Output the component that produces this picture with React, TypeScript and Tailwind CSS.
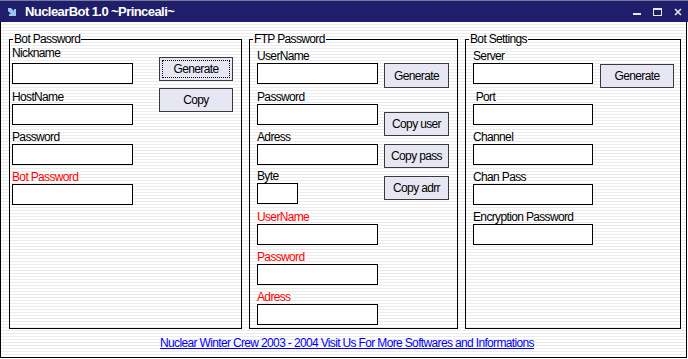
import React from 'react';

const stripes =
  'bg-[repeating-linear-gradient(to_bottom,#ffffff_0px,#ffffff_2px,#ebebeb_2px,#ebebeb_3px)]';

const Field: React.FC<{ label: string; red?: boolean; h: string; w?: string; pb?: string }> = ({
  label,
  red,
  h,
  w = 'w-[121px]',
  pb = '',
}) => (
  <div className="flex flex-col">
    <div className={`${h} ${pb} flex items-end leading-[14px] whitespace-pre ${red ? 'text-[#ff0000]' : 'text-black'}`}>
      {label}
    </div>
    <input readOnly className={`${w} h-[21px] border border-black bg-white outline-none`} />
  </div>
);

const Btn: React.FC<{ label: string; cls: string; focus?: boolean }> = ({ label, cls, focus }) => (
  <button
    className={`relative ${cls} border border-[#3a3a3a] bg-[#e7e7f3] text-black leading-[14px] flex items-center justify-center`}
  >
    {focus && <span className="absolute inset-[2px] border border-dotted border-black" />}
    {label}
  </button>
);

const Group: React.FC<{ title: string; cls: string; children: React.ReactNode }> = ({ title, cls, children }) => (
  <fieldset className={`${cls} h-[297px] border border-black m-0 p-0 min-w-0`}>
    <legend className="ml-[3px] px-[1px] leading-[14px] text-black">{title}</legend>
    {children}
  </fieldset>
);

export default function App() {
  return (
    <div className="w-[688px] h-[359px] bg-white font-['Liberation_Sans',Arial,sans-serif] text-[12px] tracking-[-0.65px] overflow-hidden">
      {/* title bar */}
      <div className="h-[22px] bg-[#1e1e6a] border-t border-[#7a7aa0] flex items-center">
        <svg width="10" height="10" viewBox="0 0 10 10" className="ml-[7px]">
          <path d="M1 1 L4 1 L7 4 L7 2 L9 2 L9 9 L2 9 L2 7 L4 7 L1 4 Z" fill="#9cc4f0" />
        </svg>
        <span className="ml-[8px] text-white font-bold text-[13px] tracking-[-0.57px] leading-none">
          NuclearBot 1.0 ~Princeali~
        </span>
        <div className="ml-auto mr-[6px] flex items-center gap-[12px] text-white">
          <svg width="8" height="8" viewBox="0 0 8 8">
            <rect x="0" y="5" width="8" height="2" fill="#e8e8f0" />
          </svg>
          <svg width="9" height="8" viewBox="0 0 9 8">
            <rect x="0.5" y="0.5" width="8" height="7" fill="none" stroke="#e8e8f0" />
            <rect x="0" y="0" width="9" height="2" fill="#e8e8f0" />
          </svg>
          <svg width="8" height="8" viewBox="0 0 8 8">
            <path d="M1 1 L7 7 M7 1 L1 7" stroke="#e8e8f0" strokeWidth="1.6" />
          </svg>
        </div>
      </div>

      {/* body */}
      <div className={`h-[336px] w-[687px] border-l border-r border-b border-black ${stripes} flex flex-col`}>
        <div className="flex gap-[7px] pl-[8px] pt-[10px]">
          <Group title="Bot Password" cls="w-[233px]">
            <div className="flex pl-[2px]">
              <div className="flex flex-col">
                <Field label="Nickname" h="h-[17px]" pb="pb-[3px]" />
                <Field label="HostName" h="h-[20px]" />
                <Field label="Password" h="h-[19px]" />
                <Field label="Bot Password" h="h-[19px]" red />
              </div>
              <div className="flex flex-col ml-[26px] mt-[11px] gap-[7px]">
                <Btn label="Generate" cls="w-[74px] h-[24px]" focus />
                <Btn label="Copy" cls="w-[74px] h-[24px]" />
              </div>
            </div>
          </Group>

          <Group title="FTP Password" cls="w-[209px]">
            <div className="flex pl-[7px]">
              <div className="flex flex-col">
                <Field label="UserName" h="h-[17px]" />
                <Field label="Password" h="h-[20px]" />
                <Field label="Adress" h="h-[19px]" />
                <Field label="Byte" h="h-[18px]" w="w-[41px]" />
                <Field label="UserName" h="h-[20px]" red />
                <Field label="Password" h="h-[19px]" red />
                <Field label="Adress" h="h-[19px]" red />
              </div>
              <div className="flex flex-col ml-[6px]">
                <Btn label="Generate" cls="w-[65px] h-[25px] mt-[17px]" />
                <Btn label="Copy user" cls="w-[65px] h-[24px] mt-[24px]" />
                <Btn label="Copy pass" cls="w-[65px] h-[24px] mt-[8px]" />
                <Btn label="Copy adrr" cls="w-[65px] h-[24px] mt-[8px]" />
              </div>
            </div>
          </Group>

          <Group title="Bot Settings" cls="w-[216px]">
            <div className="flex pl-[7px]">
              <div className="flex flex-col">
                <Field label="Server" h="h-[17px]" w="w-[120px]" />
                <Field label=" Port" h="h-[20px]" w="w-[120px]" />
                <Field label="Channel" h="h-[19px]" w="w-[120px]" />
                <Field label="Chan Pass" h="h-[19px]" w="w-[120px]" />
                <Field label="Encryption Password" h="h-[19px]" w="w-[120px]" />
              </div>
              <div className="flex flex-col ml-[7px]">
                <Btn label="Generate" cls="w-[74px] h-[24px] mt-[18px]" />
              </div>
            </div>
          </Group>
        </div>

        <div className="flex-1 flex items-center justify-center pl-[7px]">
          <a href="#" className="text-[#0000ff] underline leading-[14px]">
            Nuclear Winter Crew 2003 - 2004 Visit Us For More Softwares and Informations
          </a>
        </div>
      </div>
    </div>
  );
}
